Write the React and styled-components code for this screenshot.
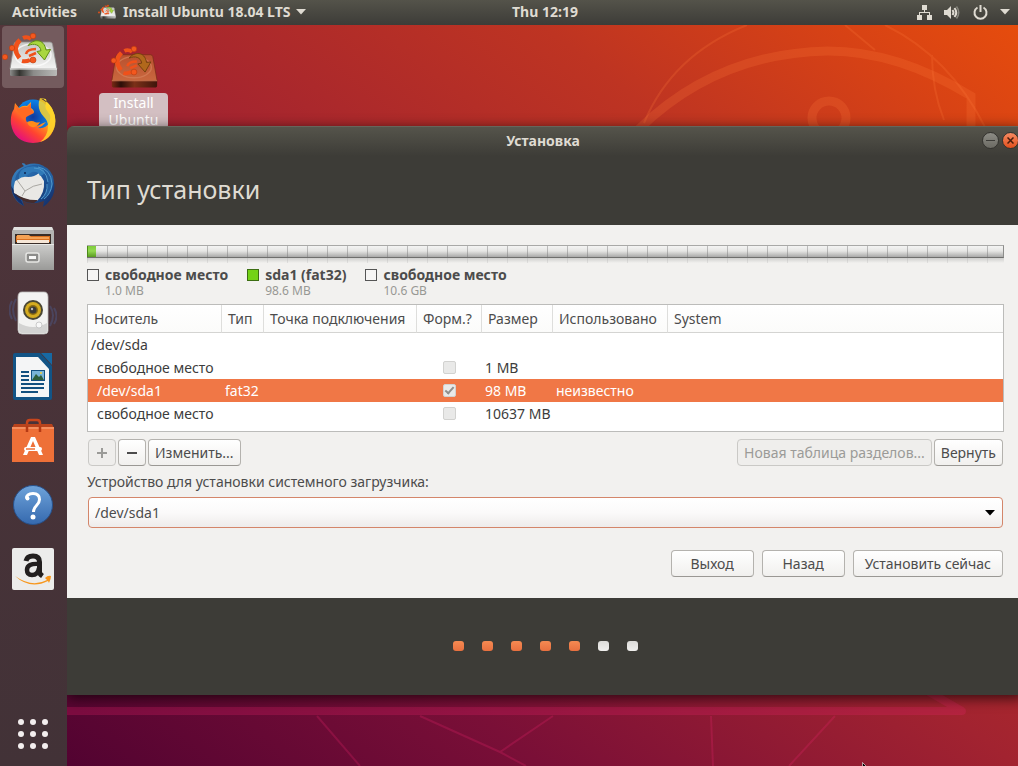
import styled, { createGlobalStyle } from 'styled-components';

const GlobalStyle = createGlobalStyle`
  *, *::before, *::after {
    box-sizing: border-box;
  }

  body {
    margin: 0;
    font-family: 'Noto Sans', 'Open Sans', sans-serif;
    font-size: 14px;
    line-height: 20px;
    color: #4c4c4c;
  }

  button, select, input {
    font: inherit;
    color: inherit;
    margin: 0;
  }
`;

const Screen = styled.div`
  display: grid;
  grid-template-rows: 25px 1fr;
  grid-template-columns: 67px minmax(0, 1fr);
  min-height: 100vh;
  overflow: hidden;
`;

/* ---------- top bar ---------- */

const TopBar = styled.header`
  grid-column: 1 / -1;
  display: grid;
  grid-template-columns: 72px 1fr auto 1fr;
  align-items: center;
  padding-bottom: 1px;
  background: linear-gradient(#54534a, #3d3c38);
  color: #dfdbd2;
  font-weight: 700;
`;

const BarGroup = styled.div`
  grid-column: 1 / 3;
  display: flex;
  align-items: center;
  gap: 22px;
  padding-left: 12px;
`;

const BarButton = styled.button`
  display: flex;
  align-items: center;
  gap: 6px;
  padding: 0;
  border: 0;
  background: none;
  white-space: nowrap;
`;

const Tray = styled.button`
  justify-self: end;
  display: flex;
  align-items: center;
  gap: 12px;
  padding: 0 8px 0 0;
  border: 0;
  background: none;
`;

/* ---------- launcher ---------- */

const Dock = styled.nav`
  display: flex;
  flex-direction: column;
  gap: 2px;
  padding: 1px 3px 16px 2px;
  background: linear-gradient(#54363b, #4a3339 40%, #423237);
`;

const DockItem = styled.button`
  display: grid;
  place-items: center;
  height: 62px;
  padding: 0;
  border: 0;
  border-radius: 4px;
  background: ${({ $active }) => ($active ? '#745b5e' : 'none')};
`;

const AppsButton = styled.button`
  display: grid;
  place-items: center;
  margin-top: auto;
  padding: 0;
  border: 0;
  background: none;
`;

/* ---------- desktop ---------- */

const Desktop = styled.main`
  position: relative;
  overflow: hidden;
  background: linear-gradient(
    to top right,
    #520331,
    #7a0f37 25%,
    #a22330 50%,
    #be3422 75%,
    #d74215 90%,
    #e64c0d
  );
`;

const Wallpaper = styled.svg`
  position: absolute;
  inset: 0;
  width: 100%;
  height: 100%;
`;

const Shelf = styled.div`
  position: relative;
  height: 101px;
  padding: 22px 32px 0;
`;

const Shortcut = styled.a`
  display: flex;
  flex-direction: column;
  align-items: center;
  gap: 2px;
  width: 69px;
  color: #fff;
  text-align: center;
  text-decoration: none;
`;

const ShortcutLabel = styled.span`
  width: 100%;
  padding: 1px 4px;
  border-radius: 4px;
  background: #d3bfc2;
  line-height: 17px;
`;

const Pointer = styled.svg`
  position: absolute;
  left: 795px;
  bottom: -12px;
`;

/* ---------- window ---------- */

// hangs a little over the right edge of the screen
const Window = styled.section`
  position: relative;
  margin-right: -6px;
  border-radius: 7px 7px 0 0;
  background: #3d3c37;
  box-shadow: 0 3px 14px rgba(0, 0, 0, 0.7);
  overflow: hidden;
`;

const TitleBar = styled.div`
  display: grid;
  grid-template-columns: 1fr auto 1fr;
  align-items: center;
  height: 30px;
  padding: 0 5px 2px 0;
  border-top: 1px solid #66655b;
  background: linear-gradient(#55544b, #3d3c37);
  color: #dfdbd2;
  font-weight: 700;
`;

const TitleText = styled.span`
  grid-column: 2;
`;

const WindowButtons = styled.div`
  display: flex;
  justify-content: flex-end;
  gap: 3px;
`;

const WindowButton = styled.button`
  display: grid;
  place-items: center;
  width: 17px;
  height: 17px;
  padding: 0;
  border: 1px solid #34332f;
  border-radius: 50%;
  background: ${({ $close }) =>
    $close
      ? 'linear-gradient(#f58a62, #e2501d)'
      : 'linear-gradient(#8d8c85, #6b6a63)'};
`;

const Heading = styled.h1`
  margin: 0;
  padding: 16px 20px 18px;
  color: #dfdbd2;
  font-size: 25px;
  font-weight: 400;
  line-height: 35px;
`;

const Content = styled.div`
  display: flex;
  flex-direction: column;
  padding: 20px 20px 21px;
  background: #f2f1ef;
`;

const DiskBar = styled.div`
  height: 13px;
  border: solid;
  border-width: 1px 1px 1px 0;
  border-color: #a9a9a7 #8d8d8b #6f6f6d;
  background:
    linear-gradient(to right, rgba(110, 110, 110, 0.4) 1px, transparent 1px) 0 0 / 20px 100%,
    linear-gradient(#f4f4f3, #e6e6e4 45%, #a9a9a8);
`;

const DiskPart = styled.div`
  height: 100%;
  border-left: 1px solid #4c8a17;
  background: linear-gradient(#7fcc3b, #92d94f 45%, #5a9a22);
`;

const Reflection = styled.div`
  height: 5px;
  background:
    linear-gradient(to right, rgba(150, 150, 150, 0.2) 1px, transparent 1px) 0 0 / 20px 100%,
    linear-gradient(#cfcfcd, #f2f1ef);
`;

const Legend = styled.ul`
  display: flex;
  gap: 19px;
  margin: 3px 0 6px;
  padding: 0;
  list-style: none;
`;

const LegendItem = styled.li`
  display: grid;
  grid-template-columns: 12px auto;
  column-gap: 6px;
  align-items: center;
  line-height: 18px;

  strong {
    white-space: nowrap;
  }

  small {
    grid-column: 2;
    color: #989894;
    font-size: 12px;
    line-height: 14px;
  }
`;

const Swatch = styled.span`
  height: 12px;
  border: 1px solid ${({ $used }) => ($used ? '#3c6e12' : '#555')};
  background: ${({ $used }) => ($used ? '#73d216' : '#f6f5f4')};
`;

const TableFrame = styled.div`
  padding-bottom: 6px;
  border: 1px solid #bcbcba;
  background: #fff;
`;

const Table = styled.table`
  width: 100%;
  border-collapse: separate;
  border-spacing: 0;
  table-layout: fixed;
  color: #3c3c3c;

  th, td {
    text-align: left;
    white-space: nowrap;
  }

  th {
    height: 28px;
    padding: 0 6px;
    border-right: 1px solid #dededc;
    border-bottom: 1px solid #d4d4d2;
    background: linear-gradient(#fff, #fbfbfa);
    color: #4c4c4c;
    font-weight: 400;
  }

  th:last-child {
    border-right: 0;
  }

  td {
    height: 23px;
    padding: 0 3px;
  }
`;

const Col = styled.col`
  width: ${({ $width }) => $width};
`;

const Row = styled.tr`
  background: ${({ $selected }) => ($selected ? '#f07746' : 'none')};
  color: ${({ $selected }) => ($selected ? '#fff' : 'inherit')};

  && td:first-child {
    padding-left: ${({ $child }) => ($child ? '9px' : '3px')};
  }
`;

const CheckBox = styled.input`
  appearance: none;
  display: grid;
  place-items: center;
  width: 13px;
  height: 13px;
  border: 1px solid #d2d2d0;
  border-radius: 2px;
  background: #e9e9e8;

  && {
    margin: 0 auto;
  }

  &:checked::after {
    content: '';
    width: 9px;
    height: 5px;
    margin-bottom: 3px;
    border: solid #8f8f8d;
    border-width: 0 0 2px 2px;
    transform: rotate(-48deg);
  }
`;

const Toolbar = styled.div`
  display: flex;
  gap: 2px;
  margin: 7px 1px 0;
`;

const Spacer = styled.span`
  flex: 1;
`;

const Button = styled.button`
  display: inline-flex;
  align-items: center;
  justify-content: center;
  min-width: ${({ $wide }) => ($wide ? '83px' : '28px')};
  height: 27px;
  padding: 0 ${({ $wide }) => ($wide ? '11px' : '6px')};
  border: 1px solid #b4b2ae;
  border-bottom-color: #9a9894;
  border-radius: 4px;
  background: linear-gradient(#fff, #f1f0ee);
  white-space: nowrap;

  &:disabled {
    border-color: #cac9c6;
    background: #efeeec;
    color: #9b9b98;
  }
`;

const FieldLabel = styled.label`
  margin-top: 6px;
`;

const SelectBox = styled.div`
  position: relative;
  margin: 5px 1px 0;

  svg {
    position: absolute;
    right: 8px;
    top: 13px;
    color: #000;
    pointer-events: none;
  }
`;

const Select = styled.select`
  appearance: none;
  display: block;
  width: 100%;
  height: 31px;
  padding: 0 6px;
  border: 1px solid #d4866a;
  border-radius: 4px;
  background: linear-gradient(#fff, #fbfafa 50%, #eeeceb);
`;

const WizardButtons = styled.div`
  display: flex;
  justify-content: flex-end;
  gap: 8px;
  margin: 22px 1px 0;
`;

const Steps = styled.div`
  display: flex;
  align-items: center;
  justify-content: center;
  gap: 18px;
  height: 97px;
  padding: 0 1px 2px 0;
`;

const Step = styled.span`
  width: 11px;
  height: 10px;
  border-radius: 3px;
  background: ${({ $done }) =>
    $done ? 'linear-gradient(#f58a52, #e8703f)' : 'linear-gradient(#dcdbd8, #f0efed)'};
`;

/* ---------- icons ---------- */

const DriveDrawing = styled.svg`
  overflow: visible;
`;

function InstallerIcon({ size = 56, tint }) {
  const id = tint ? 'driveTinted' : 'drive';
  return (
    <DriveDrawing width={size} height={(size * 46) / 56} viewBox="3 2 56 46" aria-hidden="true">
      <defs>
        <linearGradient id={id} x1="0" y1="0" x2="0" y2="1">
          <stop offset="0" stopColor={tint ? '#b8502e' : '#c4c4c2'} />
          <stop offset="1" stopColor={tint ? '#c9683f' : '#f4f4f3'} />
        </linearGradient>
        <linearGradient id={`${id}Front`}>
          <stop offset="0" stopColor={tint ? '#7a2a14' : '#8d8d8b'} />
          <stop offset="0.2" stopColor={tint ? '#2c0e08' : '#33332f'} />
          <stop offset="0.5" stopColor={tint ? '#7b3018' : '#8b8b89'} />
          <stop offset="1" stopColor={tint ? '#3f150b' : '#b9b9b7'} />
        </linearGradient>
      </defs>
      <path d="M14 10h34q2 0 2.500 2l4.500 25H8l4-25q.5-2 2-2z" fill={`url(#${id})`} stroke={tint ? '#7d2d18' : '#8c8c89'} strokeWidth=".8" />
      <ellipse cx="31" cy="23" rx="18" ry="11" fill="none" stroke={tint ? '#d5805a' : '#fff'} strokeWidth="1.500" opacity=".7" />
      <path d="M8 36.500h47v6q0 1.500-1.500 1.500h-44Q8 44 8 42.500z" fill={`url(#${id}Front)`} />
      <path d="M8 37h47" stroke={tint ? '#d9825b' : '#f7f7f5'} strokeWidth="1" />
      <g fill="none" stroke="#f0511a">
        <path d="M18 8Q9.500 16 17.500 26" strokeWidth="4.500" />
        <path d="M21 6q4-2 8 1" strokeWidth="4" />
        <path d="M20 29q4 1 8-1" strokeWidth="4" />
        <path d="M24 22q1-5 10-5M27 24l7-3" strokeWidth="2.500" />
      </g>
      <g fill="#f4581e" stroke="#b93a0d" strokeWidth=".6">
        <circle cx="31" cy="4" r="2.800" />
        <circle cx="10" cy="16" r="2.700" />
        {!tint && <circle cx="3" cy="25" r="2.700" />}
        <circle cx="31" cy="28" r="3" />
      </g>
      <path
        d="M26 13.500C31 7 42 6 44 18l4.500-.5L42.500 28 35 19.500l4-.8C38 12.500 32 11 26 13.500z"
        fill={tint ? '#b1681c' : '#a9d63f'}
        stroke={tint ? '#72400e' : '#5f8f12'}
        strokeWidth="1"
      />
    </DriveDrawing>
  );
}

function FirefoxIcon() {
  return (
    <svg width="46" height="46" viewBox="0 0 46 46" aria-hidden="true">
      <defs>
        <linearGradient id="fxBody" x1=".8" y1=".1" x2=".2" y2=".9">
          <stop offset="0" stopColor="#ffdf2e" />
          <stop offset=".4" stopColor="#ff9a1c" />
          <stop offset=".7" stopColor="#ff4430" />
          <stop offset="1" stopColor="#e5127a" />
        </linearGradient>
        <radialGradient id="fxGlobe">
          <stop offset="0" stopColor="#123a9e" />
          <stop offset="1" stopColor="#0a84e8" />
        </radialGradient>
      </defs>
      <circle cx="23" cy="19" r="17.500" fill="url(#fxGlobe)" />
      <path
        d="M5 5l4 5q4-3 8-2l4-4q0 5 0 6 3 2 3 4l-6 3q-3 1-2 5 1 5 8 6 5 0 7-2l5-2-1 1q-3 4-7 5 8 1 11-5 3-7-1-11-4-4-2-9Q38-1 30 1l2-1q9 6 11 13 3 5 2 12-2 19-22 20Q4 44 1 26q-1-9 3-15z"
        fill="url(#fxBody)"
      />
      <path d="M30 0q12 7 14 15 4 12-3 21-4 6-11 8 8-6 8-16 0-5-4-9-8-8-4-19z" fill="#ffd52b" opacity=".85" />
      <path d="M5 6l4 5q4-3 8-2l4-4v6q3 2 3 4l-6 3q-3 1-3 5Q8 18 5 6z" fill="#ff6a22" />
      <path d="M17 24q5-2 8 0 2 1 5 0-3 6-8 5-4-1-5-5z" fill="#ff8b1a" />
    </svg>
  );
}

function ThunderbirdIcon() {
  return (
    <svg width="46" height="46" viewBox="0 0 46 46" aria-hidden="true">
      <defs>
        <linearGradient id="tbBody" x1="0" y1="0" x2="1" y2="1">
          <stop offset="0" stopColor="#4089c4" />
          <stop offset=".5" stopColor="#1d5a9f" />
          <stop offset="1" stopColor="#14285f" />
        </linearGradient>
      </defs>
      <path d="M12 1q3 0 4 2Q32-2 40 11q6 9 4 19-2 9-11 15l1-6Q20 44 12 38l2 6Q5 40 2 30-1 16 7 8l7-4q-2-1-2-3z" fill="url(#tbBody)" />
      <path d="M1 24q1 13 13 20l-3-6z" fill="#14306a" />
      <path d="M6 17l6-3q10 3 17-3l5 8q1 12-7 20-12 0-23-8-1-8 2-14z" fill="#e9e8e5" />
      <path d="M7 18l8 11q8-6 17-7M15 29l-3 5" fill="none" stroke="#a9a7a2" strokeWidth="1" />
      <path d="M4 31q12 8 24 7l-4 3q-11 1-20-10z" fill="#452c2c" />
      <path d="M9 17q-1-10 9-12 14-3 19 10 3 12-6 23 15-9 12-24Q38 2 24 3 6 5 5 19z" fill="#245f9f" />
      <path d="M9 17q2-2 5-2l8-5q6-1 8 4 6-2 4-6Q28 3 18 5 9 7 9 17z" fill="#2f79b8" />
      <path d="M24 6q12 0 14 14M28 5q13 2 14 17M37 22q1 9-6 15M42 22q-1 10-8 15" fill="none" stroke="#4f97cb" strokeWidth="1" />
      <circle cx="15" cy="11" r="1" fill="#10244f" />
    </svg>
  );
}

function FilesIcon() {
  return (
    <svg width="44" height="46" viewBox="0 0 44 46" aria-hidden="true">
      <defs>
        <linearGradient id="cabinet" x1="0" y1="0" x2="0" y2="1">
          <stop offset="0" stopColor="#cdcdcb" />
          <stop offset="1" stopColor="#9a9a98" />
        </linearGradient>
      </defs>
      <path d="M3 1h38l2 4v39H1V5z" fill="#b4b4b2" />
      <path d="M3 1h38l1 3H2z" fill="#e2e2e0" />
      <path d="M4 8h36v13H4z" fill="#3a2e28" />
      <path d="M5 10h34v6H5z" fill="#d9701f" />
      <path d="M6 9h12l2 2h18v2H6z" fill="#f4a255" />
      <path d="M6 14h32v3H6z" fill="#f6e6d6" />
      <path d="M1 18h42v26H1z" fill="url(#cabinet)" />
      <path d="M1 18.500h42" stroke="#e8e8e6" />
      <rect x="15" y="27" width="13" height="9" rx="2" fill="#8c8c8a" stroke="#e6e6e4" strokeWidth="1.500" />
      <rect x="18" y="30" width="7" height="3" fill="#f8f8f7" />
    </svg>
  );
}

function SpeakerIcon() {
  return (
    <svg width="48" height="46" viewBox="0 0 48 46" aria-hidden="true">
      <g fill="none" stroke="#4c5682" strokeWidth="2" opacity=".5">
        <path d="M7 9q-6 10 0 22M3 11q-5 9 0 18M41 16q6 9 0 20M45 18q5 8 0 16" />
      </g>
      <path d="M13 2h22q4 0 4 5v34q0 3-4 3H13q-4 0-4-4V7q0-5 4-5z" fill="#f3f3f2" stroke="#bdbdbb" strokeWidth=".8" />
      <path d="M10 33q14 8 28 0v8q0 2-3 2H13q-3 0-3-3z" fill="#d3d3d2" />
      <circle cx="24" cy="20" r="10" fill="#4a4734" />
      <circle cx="24" cy="20" r="8" fill="#d5ac20" />
      <circle cx="24" cy="20" r="5" fill="#8b6c12" />
      <circle cx="24" cy="20" r="3.500" fill="#3b3a36" />
      <circle cx="23" cy="19" r="1.200" fill="#bbb" />
      <circle cx="30" cy="35" r="3" fill="#f8f8f8" stroke="#b9b9b9" strokeWidth=".7" />
    </svg>
  );
}

function WriterIcon() {
  return (
    <svg width="42" height="48" viewBox="0 0 42 48" aria-hidden="true">
      <path d="M3 0h25l12 13v32q0 2-2 2H3q-2 0-2-2V2q0-2 2-2z" fill="#125486" />
      <path d="M29 0h11v12z" fill="#1769a3" />
      <path d="M4 4h22l11 12v28H4z" fill="#f4f5f6" />
      <g fill="#12507f">
        <path d="M9 18h8v2H9zM9 22h8v2H9zM9 26h8v2H9zM9 30h23v2H9zM9 34h23v2H9zM9 38h17v2H9z" />
        <path d="M19 17h14v11H19z" />
      </g>
      <path d="M20 18h12v9H20z" fill="#79b4d6" />
      <path d="M20 27l4-6 3 3 2-2 3 5z" fill="#2e5f3a" />
      <circle cx="29" cy="20" r="1" fill="#f5d03b" />
    </svg>
  );
}

function SoftwareIcon() {
  return (
    <svg width="42" height="46" viewBox="0 0 42 46" aria-hidden="true">
      <path d="M15 14V5q0-3 3-3h7q3 0 3 3v9" fill="none" stroke="#c7451c" strokeWidth="2.500" />
      <path d="M2 6h38l2 4H0z" fill="#b8431c" />
      <path d="M0 9h42v35H0z" fill="#ee7038" />
      <path d="M0 9h42v2H0z" fill="#f58f5f" />
      <path d="M15 14V8M28 14V8" stroke="#b53a14" strokeWidth="2.500" />
      <path d="M19 19h4l8 18h-4l-6-14-6 14h-4z" fill="#fff" />
      <rect x="12" y="29" width="18" height="4" rx="2" fill="#fff" />
      <path d="M14 31h9" stroke="#ee7038" strokeWidth="1.500" />
    </svg>
  );
}

function HelpIcon() {
  return (
    <svg width="42" height="42" viewBox="0 0 42 42" aria-hidden="true">
      <defs>
        <linearGradient id="help" x1="0" y1="0" x2="0" y2="1">
          <stop offset="0" stopColor="#6ea3da" />
          <stop offset="1" stopColor="#3569ae" />
        </linearGradient>
      </defs>
      <circle cx="21" cy="21" r="19.500" fill="url(#help)" stroke="#27508a" />
      <path d="M14.500 14.500q0-5 6.500-5 6.500 0 6.500 6 0 3-3 6t-3 6.500" fill="none" stroke="#fff" strokeWidth="3" />
      <circle cx="15.500" cy="14.500" r="2" fill="#fff" />
      <circle cx="21" cy="33" r="2.500" fill="#fff" />
    </svg>
  );
}

function AmazonIcon() {
  return (
    <svg width="42" height="42" viewBox="0 0 42 42" aria-hidden="true">
      <rect width="42" height="42" rx="2" fill="#ececeb" />
      <g fill="none" stroke="#221f1f" strokeWidth="5">
        <path d="M14 13q1-5 7-5 6.500 0 6.500 6v10q0 2 3 4" />
        <path d="M27 16q-12-1-12 6 0 5 5 5 6 0 7-7" strokeWidth="4.500" />
      </g>
      <path d="M3 28q17 12 32 4l-2-2q3-3 6-2 0 3-2 7l-1-2Q18 42 3 28z" fill="#f7971d" />
    </svg>
  );
}

const CaretDown = () => (
  <svg width="10" height="6" viewBox="0 0 10 6" aria-hidden="true">
    <path d="M0 0h10L5 5.500z" fill="currentColor" />
  </svg>
);

const NetworkIcon = () => (
  <svg width="15" height="15" viewBox="0 0 15 15" fill="currentColor" aria-hidden="true">
    <path d="M5 0h5v5H8v2h5v3h2v5h-5v-5h2V8H3v2h2v5H0v-5h2V7h5V5H5z" />
  </svg>
);

const VolumeIcon = () => (
  <svg width="17" height="15" viewBox="0 0 17 15" aria-hidden="true">
    <path d="M0 5h3l4-4v13l-4-4H0z" fill="currentColor" />
    <path d="M8.500 5q2 2.500 0 5M10.500 3q3.500 4.500 0 9" fill="none" stroke="currentColor" strokeWidth="2" />
    <path d="M12.500 1.500q4.500 6 0 12" fill="none" stroke="#85847c" strokeWidth="1.500" />
  </svg>
);

const PowerIcon = () => (
  <svg width="15" height="15" viewBox="0 0 15 15" fill="none" stroke="currentColor" strokeWidth="2" aria-hidden="true">
    <path d="M4.500 2.500a6 6 0 1 0 6 0M7.500 0v7" />
  </svg>
);

const PlusIcon = () => (
  <svg width="10" height="10" viewBox="0 0 10 10" stroke="currentColor" strokeWidth="2" aria-hidden="true">
    <path d="M0 5h10M5 0v10" />
  </svg>
);

const MinusIcon = () => (
  <svg width="10" height="10" viewBox="0 0 10 10" stroke="currentColor" strokeWidth="2" aria-hidden="true">
    <path d="M0 5h10" />
  </svg>
);

const apps = [
  { name: 'Install Ubuntu', icon: <InstallerIcon />, active: true },
  { name: 'Firefox', icon: <FirefoxIcon /> },
  { name: 'Thunderbird', icon: <ThunderbirdIcon /> },
  { name: 'Files', icon: <FilesIcon /> },
  { name: 'Rhythmbox', icon: <SpeakerIcon /> },
  { name: 'Writer', icon: <WriterIcon /> },
  { name: 'Software', icon: <SoftwareIcon /> },
  { name: 'Help', icon: <HelpIcon /> },
  { name: 'Amazon', icon: <AmazonIcon /> },
];

const legend = [
  { name: 'свободное место', size: '1.0 MB' },
  { name: 'sda1 (fat32)', size: '98.6 MB', used: true },
  { name: 'свободное место', size: '10.6 GB' },
];

const columns = [
  { title: 'Носитель', width: '134px' },
  { title: 'Тип', width: '42px' },
  { title: 'Точка подключения', width: '153px' },
  { title: 'Форм.?', width: '65px' },
  { title: 'Размер', width: '71px' },
  { title: 'Использовано', width: '115px' },
  { title: 'System', width: 'auto' },
];

const partitions = [
  { device: '/dev/sda' },
  { device: 'свободное место', child: true, size: '1 MB' },
  { device: '/dev/sda1', child: true, type: 'fat32', format: true, size: '98 MB', used: 'неизвестно', selected: true },
  { device: 'свободное место', child: true, size: '10637 MB' },
];

const steps = [true, true, true, true, true, false, false];

function App() {
  return (
    <Screen>
      <GlobalStyle />
      <TopBar>
        <BarGroup>
          <BarButton>Activities</BarButton>
          <BarButton>
            <InstallerIcon size={18} />
            Install Ubuntu 18.04 LTS
            <CaretDown />
          </BarButton>
        </BarGroup>
        <BarButton>Thu 12:19</BarButton>
        <Tray aria-label="System">
          <NetworkIcon />
          <VolumeIcon />
          <PowerIcon />
          <CaretDown />
        </Tray>
      </TopBar>

      <Dock>
        {apps.map((app) => (
          <DockItem key={app.name} aria-label={app.name} $active={app.active}>
            {app.icon}
          </DockItem>
        ))}
        <AppsButton aria-label="Show Applications">
          <svg width="32" height="32" viewBox="0 0 32 32" fill="#f3eeee" aria-hidden="true">
            {[4, 16, 28].map((y) => [4, 16, 28].map((x) => <circle key={`${x}-${y}`} cx={x} cy={y} r="3" />))}
          </svg>
        </AppsButton>
      </Dock>

      <Desktop>
        <Wallpaper viewBox="0 0 951 741" preserveAspectRatio="xMidYMid slice" fill="none" aria-hidden="true">
          <g stroke="#ff7a3c" strokeOpacity=".22">
            <path d="M572 104Q650 28 761 26q70 0 143 45v40" strokeWidth="9" />
            <circle cx="762" cy="93" r="17" strokeWidth="9" />
            <path d="M577 98Q605 30 680 0M778 0l30 25M818 0q65 32 100 102M865 30q0 35 12 65" strokeWidth="2" />
          </g>
          <g stroke="#e8246c" strokeOpacity=".25">
            <path d="M0 686h895l-38-22" strokeWidth="8" strokeLinejoin="round" />
            <path d="M250 691l43 50M353 691l80 36 53-36M433 727l26 14M644 691l2 50M768 691l-46 50" strokeWidth="2" />
          </g>
        </Wallpaper>
        <Shelf>
          <Shortcut href="#install">
            <InstallerIcon size={54} tint />
            <ShortcutLabel>Install Ubuntu</ShortcutLabel>
          </Shortcut>
        </Shelf>

        <Window>
          <TitleBar>
            <TitleText>Установка</TitleText>
            <WindowButtons>
              <WindowButton aria-label="Свернуть">
                <svg width="9" height="9" viewBox="0 0 9 9" stroke="#3c3b37" aria-hidden="true">
                  <path d="M0 4.500h9" />
                </svg>
              </WindowButton>
              <WindowButton $close aria-label="Закрыть">
                <svg width="7" height="7" viewBox="0 0 7 7" stroke="#4a1c0c" strokeWidth="1.500" aria-hidden="true">
                  <path d="M.5.5l6 6M6.500.5l-6 6" />
                </svg>
              </WindowButton>
            </WindowButtons>
          </TitleBar>
          <Heading>Тип установки</Heading>

          <Content>
            <DiskBar>
              <DiskPart style={{ width: '1%' }} />
            </DiskBar>
            <Reflection />
            <Legend>
              {legend.map((item) => (
                <LegendItem key={item.size}>
                  <Swatch $used={item.used} />
                  <strong>{item.name}</strong>
                  <small>{item.size}</small>
                </LegendItem>
              ))}
            </Legend>

            <TableFrame>
              <Table>
                <colgroup>
                  {columns.map((column) => (
                    <Col key={column.title} $width={column.width} />
                  ))}
                </colgroup>
                <thead>
                  <tr>
                    {columns.map((column) => (
                      <th key={column.title}>{column.title}</th>
                    ))}
                  </tr>
                </thead>
                <tbody>
                  {partitions.map((part, index) => (
                    <Row key={index} $child={part.child} $selected={part.selected}>
                      <td>{part.device}</td>
                      <td>{part.type}</td>
                      <td />
                      <td>
                        {part.child && (
                          <CheckBox type="checkbox" aria-label={`Форм. ${part.device}`} defaultChecked={part.format} disabled />
                        )}
                      </td>
                      <td>{part.size}</td>
                      <td>{part.used}</td>
                      <td />
                    </Row>
                  ))}
                </tbody>
              </Table>
            </TableFrame>

            <Toolbar>
              <Button disabled aria-label="Добавить">
                <PlusIcon />
              </Button>
              <Button aria-label="Удалить">
                <MinusIcon />
              </Button>
              <Button>Изменить...</Button>
              <Spacer />
              <Button disabled>Новая таблица разделов...</Button>
              <Button>Вернуть</Button>
            </Toolbar>

            <FieldLabel htmlFor="bootloader">Устройство для установки системного загрузчика:</FieldLabel>
            <SelectBox>
              <Select id="bootloader" defaultValue="/dev/sda1">
                <option>/dev/sda1</option>
              </Select>
              <CaretDown />
            </SelectBox>

            <WizardButtons>
              <Button $wide>Выход</Button>
              <Button $wide>Назад</Button>
              <Button $wide>Установить сейчас</Button>
            </WizardButtons>
          </Content>

          <Steps>
            {steps.map((done, index) => (
              <Step key={index} $done={done} />
            ))}
          </Steps>
        </Window>

        <Pointer width="12" height="16" viewBox="0 0 12 16" aria-hidden="true">
          <path d="M.5.5l10 10H6l2 5-2 .5-2-5-3.500 3z" fill="#000" stroke="#fff" strokeWidth=".6" />
        </Pointer>
      </Desktop>
    </Screen>
  );
}

export default App;
